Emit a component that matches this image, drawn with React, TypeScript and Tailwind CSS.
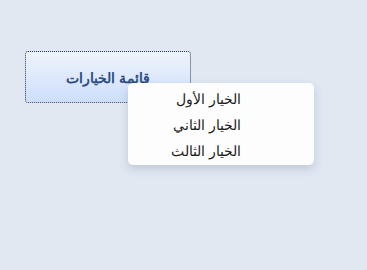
import React from 'react';

const items = ['الخيار الأول', 'الخيار الثاني', 'الخيار الثالث'];

const App: React.FC = () => {
    return (
        <div className="min-h-[270px] w-full bg-[#e1e8f2] pt-[51px] pl-[25px]" style={{ fontFamily: '"Noto Sans", sans-serif' }}>
            <div className="relative w-[166px]">
                <button
                    dir="rtl"
                    className="flex h-[52px] w-[166px] items-center justify-center rounded-[3px] border border-dotted border-[#2d3a55] bg-gradient-to-b from-[#eef3fb] to-[#cddffb] text-[14px] font-bold text-[#2e4d84]"
                >
                    قائمة الخيارات
                </button>

                {/* Dropdown */}
                <div
                    dir="rtl"
                    className="absolute left-[103px] top-[32px] w-[186px] rounded-[5px] bg-[#fdfdfd] pt-[3px] pb-[1px] pr-[73px] shadow-[0_4px_10px_rgba(40,60,90,0.18)]"
                >
                    {items.map((item) => (
                        <div key={item} className="h-[26px] text-right text-[14px] leading-[26px] text-[#1a1a1a]">
                            {item}
                        </div>
                    ))}
                </div>
            </div>
        </div>
    );
};

export default App;
